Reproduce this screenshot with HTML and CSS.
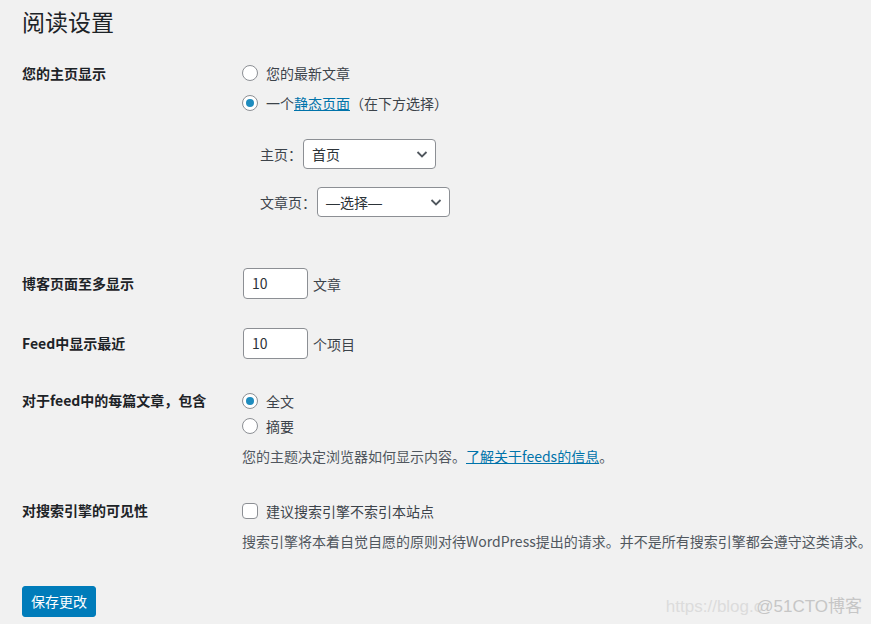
FILE: index.html
```html
<!DOCTYPE html>
<html lang="zh-CN">
<head>
<meta charset="utf-8">
<title>阅读设置</title>
<link rel="stylesheet" href="styles.css">
</head>
<body>
<div class="wrap">
  <h1 class="title">阅读设置</h1>

  <div class="row row-front">
    <div class="label">您的主页显示</div>
    <div class="field">
      <div class="opt"><span class="radio"></span><span>您的最新文章</span></div>
      <div class="opt"><span class="radio checked"></span><span>一个<a class="link" href="#">静态页面</a>（在下方选择）</span></div>
      <div class="sub">
        <div class="subrow"><span class="sublabel">主页：</span><div class="select"><span>首页</span><svg class="chev" width="14" height="14" viewBox="0 0 14 14"><path d="M2.5 5 L7 9.5 L11.5 5" fill="none" stroke="#50575e" stroke-width="1.8"/></svg></div></div>
        <div class="subrow"><span class="sublabel">文章页：</span><div class="select"><span><span class="dash">—</span>选择<span class="dash">—</span></span><svg class="chev" width="14" height="14" viewBox="0 0 14 14"><path d="M2.5 5 L7 9.5 L11.5 5" fill="none" stroke="#50575e" stroke-width="1.8"/></svg></div></div>
      </div>
    </div>
  </div>

  <div class="row row-num">
    <div class="label">博客页面至多显示</div>
    <div class="field inline"><div class="num">10</div><span class="unit">文章</span></div>
  </div>

  <div class="row row-num2">
    <div class="label">Feed中显示最近</div>
    <div class="field inline"><div class="num">10</div><span class="unit">个项目</span></div>
  </div>

  <div class="row row-feed">
    <div class="label">对于feed中的每篇文章，包含</div>
    <div class="field">
      <div class="opt short"><span class="radio checked"></span><span>全文</span></div>
      <div class="opt short"><span class="radio"></span><span>摘要</span></div>
      <p class="desc">您的主题决定浏览器如何显示内容。<a class="link" href="#">了解关于feeds的信息</a>。</p>
    </div>
  </div>

  <div class="row row-seo">
    <div class="label">对搜索引擎的可见性</div>
    <div class="field">
      <div class="opt short"><span class="check"></span><span>建议搜索引擎不索引本站点</span></div>
      <p class="desc">搜索引擎将本着自觉自愿的原则对待WordPress提出的请求。并不是所有搜索引擎都会遵守这类请求。</p>
    </div>
  </div>

  <div class="actions"><button class="btn">保存更改</button></div>
</div>
<div class="watermark"><span class="wm1">https://blog.c</span><span class="wm2">@51CTO博客</span></div>
</body>
</html>
```

FILE: styles.css
```css
* { box-sizing: border-box; }
html, body { margin: 0; padding: 0; }
body {
  background: #f1f1f1;
  color: #3c434a;
  font-family: "Microsoft YaHei", "Noto Sans CJK SC", "Noto Sans", sans-serif;
  font-size: 14px;
  width: 871px;
  height: 624px;
  overflow: hidden;
  position: relative;
}
.wrap { padding-left: 22px; }
.title {
  margin: 6px 0 0 0;
  font-size: 23px;
  line-height: 30px;
  font-weight: 400;
  color: #1d2327;
}
.row {
  display: grid;
  grid-template-columns: 220px 1fr;
}
.label {
  font-weight: 700;
  color: #1d2327;
  line-height: 30px;
}
.row-front { margin-top: 22px; }
.row-num { margin-top: 51px; }
.row-num2 { margin-top: 29px; }
.row-feed { margin-top: 29px; }
.row-feed .label, .row-seo .label { line-height: 25px; }
.row-seo { margin-top: 32px; }

.opt {
  display: flex;
  align-items: center;
  height: 30px;
  gap: 8px;
}
.opt.short { height: 25px; }
.radio {
  width: 16px; height: 16px;
  border-radius: 50%;
  border: 1px solid #8c8f94;
  background: #fff;
  display: inline-flex;
  align-items: center;
  justify-content: center;
  flex: none;
}
.radio.checked::after {
  content: "";
  width: 8px; height: 8px;
  border-radius: 50%;
  background: #1e8cbe;
}
.check {
  width: 16px; height: 16px;
  border-radius: 4px;
  border: 1px solid #8c8f94;
  background: #fff;
  flex: none;
}
.link { color: #0073aa; text-decoration: underline; }

.sub { margin-top: 21px; padding-left: 18px; display: flex; flex-direction: column; gap: 18px; }
.subrow { display: flex; align-items: center; }
.sublabel { line-height: 30px; }
.select {
  width: 133px; height: 30px;
  margin-left: 1px;
  background: #fff;
  border: 1px solid #8c8f94;
  border-radius: 4px;
  display: flex;
  align-items: center;
  justify-content: space-between;
  padding: 0 6px 0 8px;
  color: #2c3338;
}
.dash { font-family: "Liberation Sans", sans-serif; }

.inline { display: flex; align-items: center; }
.num {
  width: 65px; height: 31px;
  background: #fff;
  border: 1px solid #8c8f94;
  border-radius: 4px;
  padding-left: 8px;
  line-height: 29px;
  color: #2c3338;
  margin-left: 1px;
}
.unit { margin-left: 5px; }

.desc {
  margin: 8px 0 0 0;
  line-height: 20px;
  color: #50575e;
  white-space: nowrap;
}

.actions { margin-top: 35px; }
.btn {
  font-family: inherit;
  font-size: 14px;
  background: #007cba;
  color: #fff;
  border: 1px solid #007cba;
  border-radius: 3px;
  height: 31px;
  width: 74px;
  padding: 0;
  line-height: 29px;
}

.watermark {
  position: absolute;
  right: 9px;
  bottom: 7px;
  font-family: "Liberation Sans", "Noto Sans CJK SC", sans-serif;
  font-size: 17px;
  line-height: 20px;
  white-space: nowrap;
}
.wm1 { color: #dcdcdc; }
.wm2 { color: #c6c6c6; margin-left: -6px; }
```
